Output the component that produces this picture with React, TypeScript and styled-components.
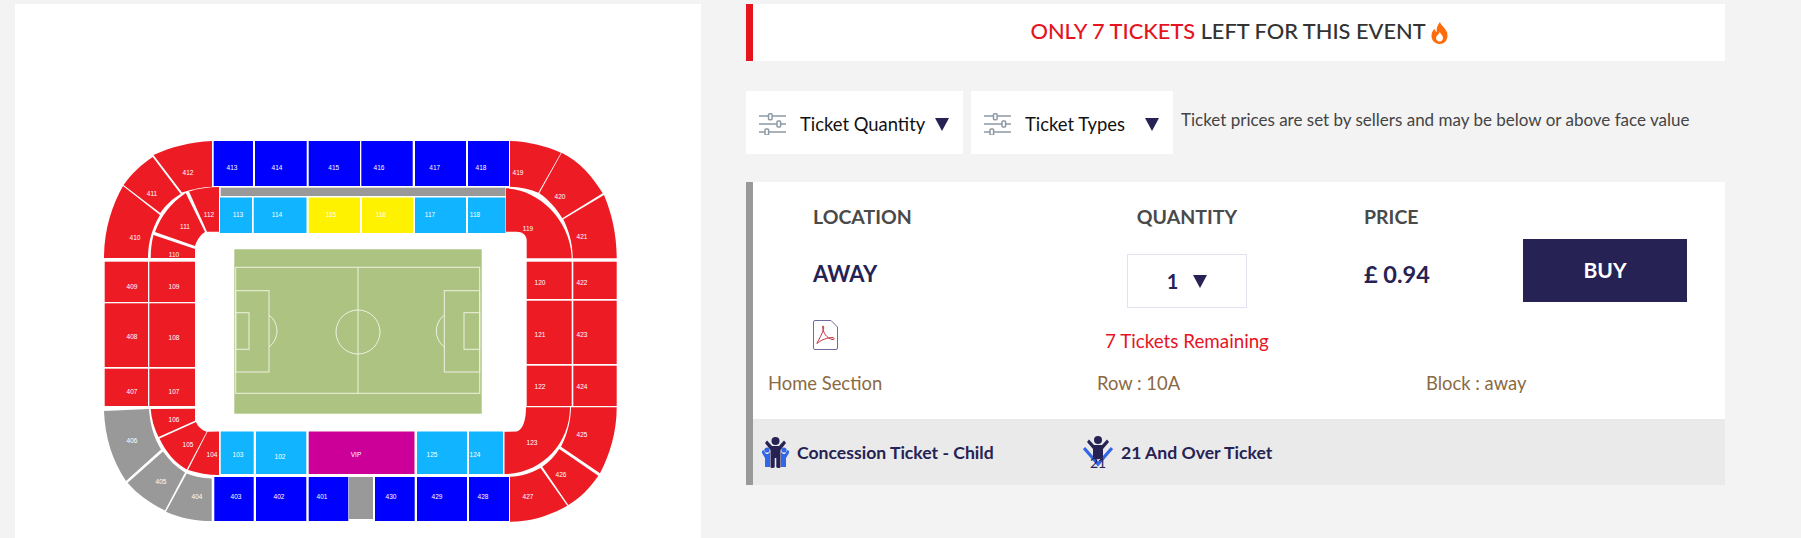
import styled, { createGlobalStyle } from "styled-components";

const RED = "#ed1c24";
const BLUE = "#0000ff";
const SKY = "#11b5ff";
const YELLOW = "#fff200";
const GREY = "#999999";
const VIP = "#cc0099";
const NAVY = "#262254";

type Rect = [number, number, number, number, string];
type Label = [string, number, number];

const rects: Rect[] = [
  [213.7, 141, 253, 186, BLUE],
  [255, 141, 306.7, 186, BLUE],
  [308.7, 141, 360, 186, BLUE],
  [361.3, 141, 412.7, 186, BLUE],
  [415, 141, 466, 186, BLUE],
  [468, 141, 509, 186, BLUE],
  [220.7, 187.7, 505.5, 196, GREY],
  [220, 197.5, 252, 233, SKY],
  [253.7, 197.5, 306.5, 233, SKY],
  [308.7, 197.5, 360, 233, YELLOW],
  [362, 197.5, 413, 233, YELLOW],
  [415, 197.5, 466, 233, SKY],
  [468, 197.5, 505.5, 233, SKY],
  [104.7, 261.7, 148, 302, RED],
  [149.3, 261.7, 195, 302, RED],
  [104.7, 303.3, 148, 367, RED],
  [149.3, 303.3, 195, 367, RED],
  [104.7, 368.7, 148, 406, RED],
  [149.3, 368.7, 195, 406, RED],
  [526.7, 261.7, 571.7, 299, RED],
  [573.3, 261.7, 616.7, 299, RED],
  [526.7, 300.7, 571.7, 364, RED],
  [573.3, 300.7, 616.7, 364, RED],
  [526.7, 365.7, 571.7, 406, RED],
  [573.3, 365.7, 616.7, 406, RED],
  [220.7, 431.5, 253.7, 474, SKY],
  [256, 431.5, 306.3, 474, SKY],
  [308.7, 431.5, 414.5, 474, VIP],
  [417, 431.5, 467, 474, SKY],
  [469, 431.5, 503, 474, SKY],
  [214.3, 477, 253.7, 521, BLUE],
  [256, 477, 306.3, 521, BLUE],
  [308.7, 477, 348.3, 521, BLUE],
  [348.8, 477, 373, 519, GREY],
  [375, 477, 414.7, 521, BLUE],
  [417, 477, 467, 521, BLUE],
  [469, 477, 509, 521, BLUE],
];

const curves: [string, string][] = [
  ["M104 258C104 230 112 205 123 186L160 215C152 228 148 243 148 258Z", RED],
  ["M123.500 185C132 173 142 164 152.700 157L180.700 194C172 199 166 205 160.300 213Z", RED],
  ["M153.500 155C171 147 190 142 212 141L212 186.700C203 187 192 189 182 192.500Z", RED],
  ["M189 191.500C198 188.500 208 187 219 187L219 231.700L207 231.700Z", RED],
  ["M185.700 193L205 232C200 235 197 240 195 246L155 232C161 216 171 203 185.700 193Z", RED],
  ["M153.500 235L195 249L195 258L150.700 258C150.700 250 151.500 243 153.500 235Z", RED],
  ["M104 411L149 409C150 425 154 438 161 449.500L126 481C112 460 105 437 104 411Z", GREY],
  ["M163 451.500C169 460 176 467 185 472.500L165 510.500C150 503 137 494 127.700 482.700Z", GREY],
  ["M186.700 473.500C194 476.500 202 478 211.700 478.500L211.700 521C195 521 180 518 166 511.700Z", GREY],
  ["M150.700 409L195 408.700L195 420.700L158.500 437C154 428 151.500 419 150.700 409Z", RED],
  ["M159.500 438.500L196 422C198 427 202 430 206.700 431.700L186.700 469.500C175 463 166 452 159.500 438.500Z", RED],
  ["M207.500 431.700L219 431.500L219 475C208 475 198 473 188 470Z", RED],
  ["M504.500 431.700L516.700 431.500C523 430 526 420 526 407.300L570 407.300C570 444 541 474 504.500 474Z", RED],
  ["M510 476.700C521 476.500 531 473 540.500 468L567.300 505.700C549 516 531 521.700 510 521.700Z", RED],
  ["M542.300 466.700C549 462 555 456 559.300 449L598.300 475.700C590 488 580 498 568.300 505Z", RED],
  ["M561 446.700C567 435 570.700 422 571 407.300L616.700 407.300C616.700 432 610 454 600 473.300Z", RED],
  ["M506 188.300C538 189 571 220 571.700 258.300L526.700 258.300L526.700 240C526.700 235 522 231.700 516.700 231.700L506 231.700Z", RED],
  ["M510 141C528 141.500 546 146 561 152.700L538.300 192.700C530 189 520 187 510 186.700Z", RED],
  ["M561.700 152.700C580 162 592 176 602.700 193.300L562.300 218.300C556 208 549 200 539.300 193.300Z", RED],
  ["M604 195C612 214 616.700 235 616.700 258.300L572.700 258.300C572.700 244 569 231 563.300 219.300Z", RED],
];

const labels: Label[] = [
  ["413", 232, 167], ["414", 277, 167], ["415", 333.700, 167], ["416", 379, 167], ["417", 434.700, 167], ["418", 481, 167],
  ["419", 518, 172], ["420", 560, 196], ["421", 582, 236], ["412", 188, 172], ["411", 152, 193], ["410", 135, 237],
  ["112", 209, 214], ["111", 185, 226], ["110", 174, 254], ["113", 238, 214], ["114", 277, 214], ["115", 331, 214],
  ["116", 381, 214], ["117", 430, 214], ["118", 475, 214], ["119", 528, 228], ["409", 132, 286], ["109", 174, 286],
  ["120", 540, 282], ["422", 582, 282], ["408", 132, 336], ["108", 174, 337], ["121", 540, 334], ["423", 582, 334],
  ["407", 132, 391], ["107", 174, 391], ["122", 540, 386], ["424", 582, 386], ["106", 174, 419], ["105", 188, 444],
  ["104", 212, 454], ["103", 238, 454], ["102", 280, 456], ["VIP", 356, 454], ["125", 432, 454], ["124", 475, 454],
  ["123", 532, 442], ["425", 582, 434], ["426", 561, 474], ["427", 528, 496], ["406", 132, 440], ["405", 161, 481],
  ["404", 197, 496], ["403", 236, 496], ["402", 279, 496], ["401", 322, 496], ["430", 391, 496], ["429", 437, 496],
  ["428", 483, 496],
];

function StadiumMap() {
  return (
    <MapSvg viewBox="15 4 686 534" width="686" height="534">
      {rects.map(([x1, y1, x2, y2, fill], i) => (
        <rect key={i} x={x1} y={y1} width={x2 - x1} height={y2 - y1} fill={fill} />
      ))}
      {curves.map(([d, fill], i) => (
        <path key={i} d={d} fill={fill} />
      ))}
      <rect x="234.300" y="249.300" width="247.400" height="164.400" fill="#adc381" />
      <g fill="none" stroke="#eef2e2" strokeWidth="1">
        <rect x="235.700" y="267.300" width="244" height="126" />
        <path d="M358 267.300V393.300" />
        <circle cx="358" cy="332" r="22" />
        <rect x="235.700" y="290.700" width="33.300" height="81.300" />
        <rect x="235.700" y="312.700" width="13.300" height="36.600" />
        <path d="M269 315A20 20 0 0 1 269 347" />
        <rect x="444.300" y="290.700" width="35.400" height="81.300" />
        <rect x="464" y="312.700" width="15.700" height="36.600" />
        <path d="M444.300 315A20 20 0 0 0 444.300 347" />
      </g>
      {labels.map(([text, x, y]) => (
        <SectionLabel key={text} x={x} y={y} textAnchor="middle" dominantBaseline="central">
          {text}
        </SectionLabel>
      ))}
    </MapSvg>
  );
}

function SlidersIcon() {
  return (
    <svg width="27" height="22" viewBox="0 0 27 22" fill="none">
      <g stroke="#8e99a6" strokeWidth="1.500">
        <path d="M0 3H27M0 11H27M0 19H27" />
        <rect x="9.500" y="0.800" width="3.600" height="6" rx="1" fill="#fff" />
        <rect x="18" y="8" width="3.600" height="6" rx="1" fill="#fff" />
        <rect x="6" y="16" width="3.600" height="6" rx="1" fill="#fff" />
      </g>
    </svg>
  );
}

function FlameIcon() {
  return (
    <svg width="17" height="22" viewBox="0 0 17 22">
      <path
        d="M9 0C10 4 16.500 7 16.500 13.500C16.500 18.500 13 22 8.500 22C4 22 0.500 18.500 0.500 13.800C0.500 10.500 2 8.500 3.500 6.800C4 8.500 4.500 9.500 5.800 10C5.300 6 6.500 3 9 0Z"
        fill="#ff6a0a"
      />
      <path d="M8.800 10C9.500 12 12 13.500 12 16C12 18 10.500 19.500 8.500 19.500C6.500 19.500 5 18 5 16C5 13.800 7.800 12.500 8.800 10Z" fill="#fff" />
    </svg>
  );
}

function PdfIcon() {
  return (
    <svg width="25" height="30" viewBox="0 0 25 30" fill="none">
      <path
        d="M2 .5H18L24.500 7V28A1.500 1.500 0 0 1 23 29.500H2A1.500 1.500 0 0 1 .5 28V2A1.500 1.500 0 0 1 2 .5Z"
        stroke="#6f6a99"
        fill="#fff"
      />
      <path
        d="M4 23C6 19.500 9 14 10.500 9.500C11 7 10.500 5.500 9.800 6C9 7 10 11 12.500 15C14 17 17 19.500 20 19.500C22 19.500 21.500 17.500 19 17.500C15 17.500 8 20 5.500 22.500C4.500 23.500 3.500 23.800 4 23Z"
        stroke="#c8303a"
        strokeWidth="1"
      />
    </svg>
  );
}

function FamilyIcon() {
  return (
    <svg width="27" height="31" viewBox="0 0 27 31">
      <g fill="#3366e6">
        <circle cx="5" cy="13" r="2.600" />
        <circle cx="22" cy="13" r="2.600" />
        <path d="M0 14L1.500 13L4 17H6L8 15V30H3V21L0 16ZM27 14L25.500 13L23 17H21L19 15V30H24V21L27 16Z" />
      </g>
      <circle cx="13.500" cy="4" r="4" fill={NAVY} />
      <path
        d="M3 6L5 3.500L10 9H17L22 3.500L24 6L18.500 13V30C18.500 31.300 15 31.300 14.300 30V21H12.700V30C12 31.300 8.500 31.300 8.500 30V13Z"
        fill={NAVY}
      />
    </svg>
  );
}

function AdultIcon() {
  return (
    <svg width="30" height="32" viewBox="0 0 30 32">
      <path d="M1 12L15 28L29 12" fill="none" stroke="#3366e6" strokeWidth="3.200" />
      <circle cx="15" cy="4" r="4" fill={NAVY} />
      <path d="M4 6L6 3.500L11 9H19L24 3.500L26 6L20 13V21C20 24 10 24 10 21V13Z" fill={NAVY} />
    </svg>
  );
}

export default function App() {
  return (
    <>
      <GlobalStyle />
      <Page>
        <MapPanel>
          <StadiumMap />
        </MapPanel>
        <Content>
          <Banner>
            <BannerText>
              <Hot>ONLY 7 TICKETS</Hot> LEFT FOR THIS EVENT
            </BannerText>
            <FlameIcon />
          </Banner>

          <FilterRow>
            <FilterButton $width={217}>
              <SlidersIcon />
              <FilterLabel>Ticket Quantity</FilterLabel>
              <Triangle />
            </FilterButton>
            <FilterButton $width={202}>
              <SlidersIcon />
              <FilterLabel>Ticket Types</FilterLabel>
              <Triangle />
            </FilterButton>
            <Note>Ticket prices are set by sellers and may be below or above face value</Note>
          </FilterRow>

          <TicketCard>
            <TicketBody>
              <TicketRow>
                <LocationCol>
                  <ColHead>LOCATION</ColHead>
                  <Location>AWAY</Location>
                  <PdfLink>
                    <PdfIcon />
                  </PdfLink>
                </LocationCol>
                <QuantityCol>
                  <ColHead>QUANTITY</ColHead>
                  <QuantitySelect>
                    <QuantityValue>1</QuantityValue>
                    <Triangle />
                  </QuantitySelect>
                  <Remaining>7 Tickets Remaining</Remaining>
                </QuantityCol>
                <PriceCol>
                  <ColHead>PRICE</ColHead>
                  <Price>£ 0.94</Price>
                </PriceCol>
                <BuyButton>BUY</BuyButton>
              </TicketRow>
              <MetaRow>
                <MetaItem>Home Section</MetaItem>
                <MetaItem>Row : 10A</MetaItem>
                <MetaItem>Block : away</MetaItem>
              </MetaRow>
            </TicketBody>
            <TagStrip>
              <Tag $width={321}>
                <FamilyIcon />
                <TagLabel>Concession Ticket - Child</TagLabel>
              </Tag>
              <Tag>
                <AdultWrap>
                  <AdultIcon />
                  <AdultBadge>21</AdultBadge>
                </AdultWrap>
                <TagLabel>21 And Over Ticket</TagLabel>
              </Tag>
            </TagStrip>
          </TicketCard>
        </Content>
      </Page>
    </>
  );
}

const GlobalStyle = createGlobalStyle`
  html, body {
    margin: 0;
    padding: 0;
    height: 538px;
    overflow: hidden;
    background: #f3f3f3;
    font-family: "Lato", "Liberation Sans", sans-serif;
  }
`;

const Page = styled.div`
  display: flex;
  align-items: flex-start;
  padding: 4px 0 0 15px;
  height: 534px;
`;

const MapPanel = styled.div`
  width: 686px;
  height: 534px;
  background: #fff;
  flex: none;
`;

const MapSvg = styled.svg`
  display: block;
`;

const SectionLabel = styled.text`
  font-family: "Liberation Sans", sans-serif;
  font-size: 6.5px;
  fill: #fff;
`;

const Content = styled.div`
  width: 979px;
  margin-left: 45px;
  flex: none;
`;

const Banner = styled.div`
  height: 57px;
  display: flex;
  align-items: center;
  justify-content: center;
  gap: 5px;
  background: #fff;
  border-left: 7px solid #e5141f;
`;

const BannerText = styled.div`
  font-size: 21.8px;
  font-weight: 500;
  color: #333;
  margin-bottom: 4px;
`;

const Hot = styled.span`
  color: #e5141f;
`;

const FilterRow = styled.div`
  display: flex;
  align-items: flex-start;
  gap: 8px;
  margin-top: 30px;
`;

const FilterButton = styled.div<{ $width: number }>`
  width: ${(p) => p.$width}px;
  height: 63px;
  display: flex;
  align-items: center;
  padding: 3px 14px 0 13px;
  box-sizing: border-box;
  background: #fff;
`;

const FilterLabel = styled.span`
  margin-left: 14px;
  font-size: 18.400px;
  color: #111;
  flex: 1;
`;

const Triangle = styled.span`
  display: block;
  width: 0;
  height: 0;
  border-left: 7px solid transparent;
  border-right: 7px solid transparent;
  border-top: 13px solid ${NAVY};
`;

const Note = styled.div`
  margin-top: 18px;
  font-size: 17px;
  line-height: 22px;
  color: #444;
  white-space: nowrap;
`;

const TicketCard = styled.div`
  margin-top: 28px;
  border-left: 7px solid #999;
`;

const TicketBody = styled.div`
  background: #fff;
  padding: 23px 0 24px;
`;

const TicketRow = styled.div`
  display: flex;
  align-items: flex-start;
  padding-left: 60px;
`;

const LocationCol = styled.div`
  width: 314px;
  flex: none;
`;

const ColHead = styled.div`
  font-size: 19.500px;
  line-height: 24px;
  font-weight: 700;
  color: #4a4a4a;
  white-space: nowrap;
`;

const Location = styled.div`
  margin-top: 32px;
  font-size: 22px;
  line-height: 26px;
  font-weight: 700;
  color: ${NAVY};
`;

const PdfLink = styled.div`
  margin-top: 33px;
  line-height: 0;
`;

const QuantityCol = styled.div`
  width: 120px;
  margin-right: 117px;
  flex: none;
  display: flex;
  flex-direction: column;
  align-items: center;
`;

const QuantitySelect = styled.div`
  width: 120px;
  height: 54px;
  margin-top: 25px;
  box-sizing: border-box;
  display: flex;
  align-items: center;
  justify-content: center;
  gap: 15px;
  background: #fff;
  border: 1px solid #e2e2f2;
`;

const QuantityValue = styled.span`
  font-size: 20px;
  font-weight: 700;
  color: ${NAVY};
`;

const Remaining = styled.div`
  margin-top: 21px;
  font-size: 18.800px;
  line-height: 24px;
  color: #e5141f;
  white-space: nowrap;
`;

const PriceCol = styled.div`
  width: 159px;
  flex: none;
`;

const Price = styled.div`
  margin-top: 31px;
  font-size: 23.500px;
  line-height: 28px;
  font-weight: 700;
  color: ${NAVY};
`;

const BuyButton = styled.button`
  width: 164px;
  height: 63px;
  margin-top: 34px;
  padding: 0 0 3px;
  border: none;
  background: ${NAVY};
  color: #fff;
  font: 700 21px "Lato", "Liberation Sans", sans-serif;
`;

const MetaRow = styled.div`
  display: grid;
  grid-template-columns: 329px 329px 1fr;
  padding-left: 15px;
  margin-top: 18px;
`;

const MetaItem = styled.div`
  font-size: 18.400px;
  line-height: 24px;
  color: #8b6a43;
`;

const TagStrip = styled.div`
  height: 66px;
  display: flex;
  align-items: center;
  padding-left: 9px;
  background: #eaeaea;
`;

const Tag = styled.div<{ $width?: number }>`
  display: flex;
  align-items: center;
  gap: 8px;
  width: ${(p) => (p.$width ? `${p.$width}px` : "auto")};
  flex: none;
`;

const TagLabel = styled.span`
  font-size: 17.600px;
  font-weight: 700;
  color: ${NAVY};
`;

const AdultWrap = styled.div`
  position: relative;
  line-height: 0;
`;

const AdultBadge = styled.span`
  position: absolute;
  left: 7px;
  top: 19px;
  font-size: 14px;
  line-height: 16px;
  color: ${NAVY};
`;
